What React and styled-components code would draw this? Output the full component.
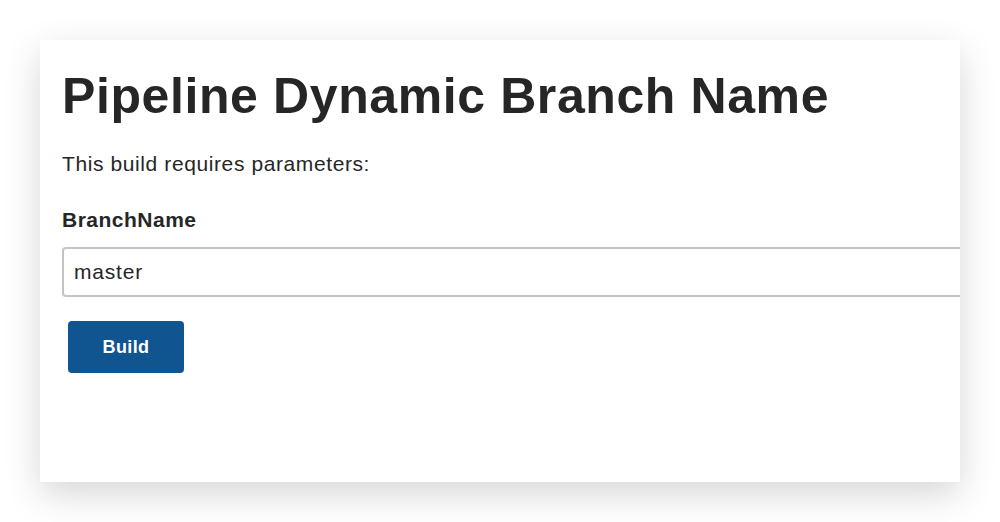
import React, { useState } from "react";
import styled, { createGlobalStyle } from "styled-components";

const GlobalStyle = createGlobalStyle`
  html, body {
    margin: 0;
    padding: 0;
    background: #ffffff;
  }
  body {
    font-family: "Liberation Sans", Arial, Helvetica, sans-serif;
    color: #262626;
  }
`;

const Page = styled.div`
  width: 1000px;
  height: 522px;
  padding: 40px;
  box-sizing: border-box;
`;

const Card = styled.div`
  width: 920px;
  height: 442px;
  background: #ffffff;
  box-shadow: 0 12px 34px rgba(0, 0, 0, 0.16);
  overflow: hidden;
  padding: 29px 0 0 22px;
  box-sizing: border-box;
`;

const Title = styled.h1`
  margin: 0;
  font-size: 50px;
  line-height: 55px;
  font-weight: bold;
  letter-spacing: 0.6px;
  color: #262626;
  white-space: nowrap;
`;

const Intro = styled.p`
  margin: 27px 0 0;
  font-size: 21px;
  line-height: 25px;
  letter-spacing: 0.6px;
`;

const Label = styled.label`
  display: block;
  margin-top: 31px;
  font-size: 21px;
  line-height: 25px;
  font-weight: bold;
  letter-spacing: 0.5px;
`;

const Input = styled.input`
  display: block;
  width: 1000px;
  height: 50px;
  margin-top: 15px;
  padding: 0 10px;
  box-sizing: border-box;
  border: 2px solid #c4c4c4;
  border-radius: 4px;
  font-family: inherit;
  font-size: 21px;
  letter-spacing: 0.8px;
  color: #262626;
  outline: none;
`;

const Button = styled.button`
  display: block;
  width: 116px;
  height: 52px;
  margin: 24px 0 0 6px;
  border: none;
  border-radius: 4px;
  background: #10558f;
  color: #ffffff;
  font-family: inherit;
  font-size: 18px;
  font-weight: bold;
  letter-spacing: 0.4px;
  cursor: pointer;
`;

export default function App() {
  const [branch, setBranch] = useState("master");
  return (
    <Page>
      <GlobalStyle />
      <Card>
        <Title>Pipeline Dynamic Branch Name</Title>
        <Intro>This build requires parameters:</Intro>
        <Label htmlFor="branch">BranchName</Label>
        <Input
          id="branch"
          value={branch}
          onChange={(e) => setBranch(e.target.value)}
        />
        <Button>Build</Button>
      </Card>
    </Page>
  );
}
